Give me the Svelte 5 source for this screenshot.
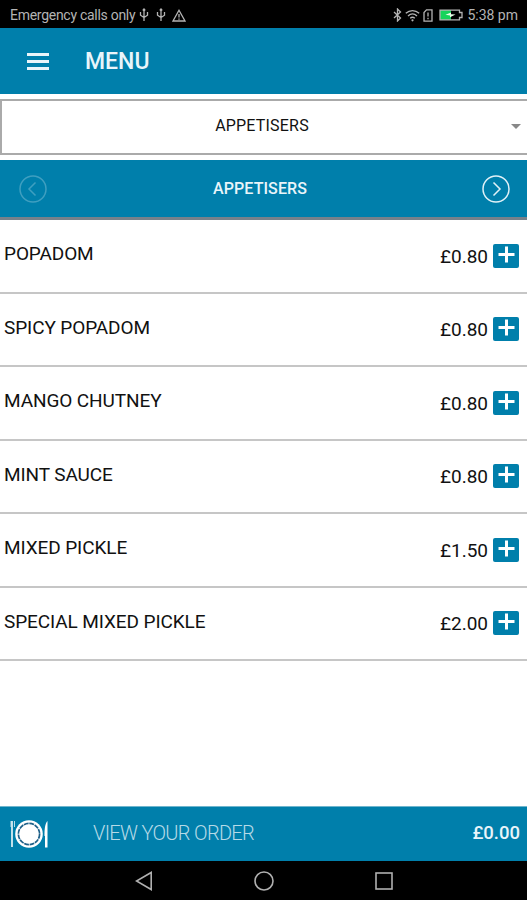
<script>
  const categories = ['APPETISERS']
  const items = [
    { name: 'POPADOM', price: 0.8 },
    { name: 'SPICY POPADOM', price: 0.8 },
    { name: 'MANGO CHUTNEY', price: 0.8 },
    { name: 'MINT SAUCE', price: 0.8 },
    { name: 'MIXED PICKLE', price: 1.5 },
    { name: 'SPECIAL MIXED PICKLE', price: 2 }
  ]

  let current = $state(0)
  let total = $state(0)

  const money = (n) => '£' + n.toFixed(2)

  function step(by) {
    current = Math.max(0, Math.min(categories.length - 1, current + by))
  }

  function add(item) {
    total += item.price
  }
</script>

<div class="screen">
  <div class="status">
    <span class="carrier">Emergency calls only</span>
    {#each [0, 1] as n (n)}
      <svg class="usb" width="10" height="14" viewBox="0 0 10 14">
        <path d="M5 1v12M1.5 4v3.2L5 9.5l3.5-2.3V4M3.8 2.5L5 1l1.2 1.5" />
      </svg>
    {/each}
    <svg class="warn" width="14" height="13" viewBox="0 0 14 13">
      <path d="M7 1.3L13 12H1zM7 5v3.5M7 9.6v1.2" />
    </svg>
    <div class="tray">
      <svg width="9" height="14" viewBox="0 0 9 14">
        <path d="M1 4l6.5 6L4.5 13V1l3 3L1 10" />
      </svg>
      <svg width="15" height="13" viewBox="0 0 15 13">
        <path d="M.8 4.3c4-3.7 9.4-3.7 13.4 0M3 6.9c2.7-2.5 6.3-2.5 9 0M5.2 9.3c1.4-1.3 3.2-1.3 4.6 0" />
        <circle class="solid" cx="7.5" cy="11.3" r="1.1" />
      </svg>
      <svg class="sim" width="10" height="13" viewBox="0 0 10 13">
        <path d="M3.5.8H9v11.4H1V3.5zM5 3.5v4M5 8.8v1.4" />
      </svg>
      <svg class="battery" width="24" height="12" viewBox="0 0 24 12">
        <rect class="charge" x="1" y="1" width="11" height="10" />
        <path d="M12 1.2h8.5v2.3H23v5h-2.5v2.3H1V1.2z" />
        <path class="bolt" d="M6.5 5.8L12 3.4v1.8l4.5.4L11 8.3V6.5z" />
      </svg>
      <span>5:38 pm</span>
    </div>
  </div>

  <header>
    <button class="burger" aria-label="Open navigation"><i></i><i></i><i></i></button>
    <h1>MENU</h1>
  </header>

  <div class="select">
    <span>{categories[current]}</span>
    <i class="caret"></i>
  </div>

  <nav>
    <button class="arrow" disabled={current === 0} aria-label="Previous" onclick={() => step(-1)}>
      <svg width="28" height="28" viewBox="0 0 28 28">
        <circle cx="14" cy="14" r="13" /><path d="M16.5 7.5L10 14l6.5 6.5" />
      </svg>
    </button>
    <span>{categories[current]}</span>
    <button class="arrow" aria-label="Next" onclick={() => step(1)}>
      <svg width="28" height="28" viewBox="0 0 28 28">
        <circle cx="14" cy="14" r="13" /><path d="M11.5 7.5L18 14l-6.5 6.5" />
      </svg>
    </button>
  </nav>

  <ul>
    {#each items as item (item.name)}
      <li>
        <span class="name">{item.name}</span>
        <span class="price">{money(item.price)}</span>
        <button class="add" aria-label="Add {item.name}" onclick={() => add(item)}>
          <svg width="26" height="24" viewBox="0 0 26 24"><path d="M13.5 2.5v16M5.5 10.5h16" /></svg>
        </button>
      </li>
    {/each}
  </ul>

  <footer>
    <svg class="plate" width="38" height="30" viewBox="0 0 38 30">
      <circle class="solid" cx="19" cy="15" r="13.8" />
      <circle class="rim" cx="19" cy="15" r="10.6" />
      <path class="fork" d="M1 2v6M4.5 2v6" />
      <path class="handle" d="M2 2v26" />
      <path class="solid" d="M37.5 2v26.5h-2.5V17h-.5c0-7 .5-12.5 3-15z" />
    </svg>
    <span class="view">VIEW YOUR ORDER</span>
    <span class="total">{money(total)}</span>
  </footer>

  <div class="softkeys">
    <svg width="18" height="20" viewBox="0 0 18 20"><path d="M16.2 1.5v17L1.5 10z" /></svg>
    <svg width="20" height="20" viewBox="0 0 20 20"><circle cx="10" cy="10" r="9" /></svg>
    <svg width="18" height="18" viewBox="0 0 18 18"><rect x="1" y="1" width="16" height="16" /></svg>
  </div>
</div>

<style>
  :global(body) { background: #fff; }

  .screen {
    display: flex; flex-direction: column;
    height: 900px; overflow: hidden;
    font-family: Roboto, sans-serif; color: #111;
  }
  svg { display: block; flex-shrink: 0; fill: none; }
  button { background: none; border: none; padding: 0; cursor: pointer; }

  .status {
    display: flex; align-items: center;
    height: 28px; box-sizing: border-box; padding: 2px 9px 0 10px;
    background: #000; color: #b4b4b4; font-size: 14px;
  }
  .status svg { stroke: #b4b4b4; stroke-width: 1.3; }
  .status .solid { fill: #b4b4b4; stroke: none; }
  .carrier { letter-spacing: -.28px; }
  .usb { margin-left: 4px; }
  .usb + .usb { margin-left: 7px; }
  .warn { margin-left: 6px; }
  .tray { display: flex; align-items: center; margin-left: auto; }
  .tray svg + svg { margin-left: 3px; }
  .tray .battery { margin: 0 4px 0 6px; }
  .status .charge { fill: #16d45c; stroke: none; }
  .status .bolt { fill: #e8ffe8; stroke: none; }

  header {
    display: flex; align-items: center; flex-shrink: 0;
    height: 66px; padding-left: 27px;
    background: #007fab; color: #e9f5fa;
  }
  .burger { display: grid; gap: 4px; width: 22px; }
  .burger i { height: 3px; background: #e9f5fa; }
  h1 { margin: 0 0 0 36px; font-size: 23px; font-weight: 500; }

  .select {
    display: flex; align-items: center; justify-content: center; position: relative;
    height: 56px; box-sizing: border-box; margin: 5px 0; padding: 0 5px 4px 0;
    border: 2px solid #aaa; border-right: none;
    font-size: 16px; letter-spacing: .2px;
  }
  .caret {
    position: absolute; right: 6px; top: 23px;
    border: 5.5px solid transparent; border-top-color: #888; border-bottom: none;
  }

  nav {
    display: flex; align-items: center; justify-content: space-between;
    height: 60px; box-sizing: border-box; padding: 0 17px 0 19px;
    background: #007fab; border-bottom: 3px solid #77818a;
    color: #e9f5fa; font-size: 16px; font-weight: 500; letter-spacing: .1px;
  }
  nav span { margin-right: 9px; }
  .arrow svg { stroke: #e0f1f7; stroke-width: 1.5; }
  .arrow:disabled { opacity: .28; cursor: default; }

  ul { list-style: none; margin: 0; padding: 0; flex: 1; }
  li {
    display: flex; align-items: center;
    height: 73.5px; box-sizing: border-box; padding: 0 8px 0 4px;
    border-bottom: 2px solid #c6c6c6;
  }
  .name { flex: 1; padding-bottom: 4px; font-size: 19px; letter-spacing: -.1px; }
  .price { padding-top: 1px; font-size: 19px; }
  .add { margin-left: 5px; border-radius: 2px; background: #007fab; }
  .add svg { stroke: #fff; stroke-width: 3; }

  footer {
    display: flex; align-items: center; flex-shrink: 0;
    height: 55px; box-sizing: border-box; padding: 0 7px 3px 10px;
    background: #007fab; border-top: 1px solid #6fb5cd;
    color: #e9f5fa;
  }
  .plate { position: relative; top: 1px; }
  .plate .solid { fill: #fff; }
  .plate .rim { stroke: #1c5f88; stroke-width: 1.7; stroke-dasharray: 4.8 .75; }
  .plate .fork { stroke: #b9dce8; stroke-width: 1; }
  .plate .handle { stroke: #d5ebf2; stroke-width: 1.8; }
  .view { margin-left: 45px; font-size: 20px; font-weight: 300; letter-spacing: -.68px; color: #b5dae7; }
  .total { margin-left: auto; font-size: 18.5px; font-weight: 500; }

  .softkeys {
    display: flex; align-items: center; justify-content: center; gap: 101px;
    height: 39px; flex-shrink: 0; background: #000;
  }
  .softkeys svg { stroke: #b0b0b0; stroke-width: 1.6; }
</style>
